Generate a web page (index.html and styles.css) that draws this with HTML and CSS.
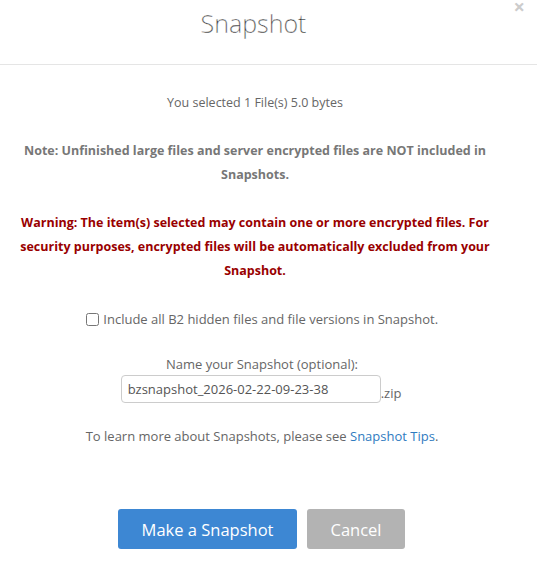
FILE: index.html
```html
<!DOCTYPE html>
<html lang="en">
  <head>
    <meta charset="UTF-8" />
    <meta name="viewport" content="width=device-width, initial-scale=1.0" />
    <title>Snapshot</title>
    <link rel="stylesheet" href="styles.css">
  </head>
  <body>
    <div class="modal">
      <div class="modal-header">
        <button class="close" type="button">&times;</button>
        <h4 class="modal-title">Snapshot</h4>
      </div>
      <div class="modal-body">
        <div class="messages">
          <p>You selected 1 File(s) 5.0 bytes</p>
          <p class="note">Note: Unfinished large files and server encrypted files are NOT included in Snapshots.</p>
          <p class="warning">Warning: The item(s) selected may contain one or more encrypted files. For security purposes, encrypted files will be automatically excluded from your Snapshot.</p>
        </div>
        <div class="options">
          <p class="check-row">
            <label><input type="checkbox" class="check" /> Include all B2 hidden files and file versions in Snapshot.</label>
          </p>
          <div class="name-label">Name your Snapshot (optional):</div>
          <div class="name-row">
            <input type="text" class="name-input" value="bzsnapshot_2026-02-22-09-23-38" /><span>.zip</span>
          </div>
          <p class="tips">To learn more about Snapshots, please see <a href="#">Snapshot Tips</a>.</p>
        </div>
      </div>
      <div class="modal-footer">
        <button class="btn btn-primary" type="button">Make a Snapshot</button>
        <button class="btn btn-cancel" type="button">Cancel</button>
      </div>
    </div>
  </body>
</html>
```

FILE: styles.css
```css
body {
  margin: 0;
  background-color: #fff;
  font-family: "Open Sans", "Noto Sans", sans-serif;
  color: #666;
}
.modal {
  width: 537px;
}
.modal-header {
  position: relative;
  height: 64px;
  border-bottom: 1px solid #e5e5e5;
  text-align: center;
  padding-right: 30px;
}
.modal-title {
  margin: 0;
  padding-top: 6px;
  font-family: "Open Sans Light", "Open Sans", sans-serif;
  font-size: 25px;
  font-weight: 300;
  line-height: 34px;
  color: #333;
  -webkit-text-stroke: 0.35px #fff;
}
.close {
  position: absolute;
  top: -3px;
  right: 12px;
  border: 0;
  background: none;
  padding: 0;
  font-family: "Open Sans", sans-serif;
  font-size: 20px;
  font-weight: 700;
  color: #ccc;
  line-height: 20px;
}
.modal-body {
  padding-top: 26px;
  text-align: center;
  line-height: 24px;
}
.modal-body p {
  margin: 0 0 24px;
}
.messages {
  padding: 0 37px 0 10px;
  font-size: 12.5px;
}
.options {
  padding: 0 23px 0 10px;
  font-size: 13px;
}
.note {
  font-weight: 700;
  color: #777;
}
.warning {
  font-weight: 700;
  color: #990000;
}
.check {
  width: 13px;
  height: 13px;
  margin: 0 1px 0 0;
  vertical-align: -2px;
}
.name-label {
  margin-top: -2px;
  line-height: 22px;
}
.name-row {
  display: flex;
  justify-content: center;
  align-items: flex-end;
  padding-right: 2px;
  margin-bottom: 21px;
}
.name-input {
  box-sizing: border-box;
  width: 260px;
  height: 28px;
  padding: 0 6px;
  border: 1px solid #ccc;
  border-radius: 4px;
  font-family: "Open Sans", sans-serif;
  font-size: 13px;
  color: #555;
}
.name-row span {
  line-height: 20px;
}
.tips a {
  color: #2f7bbf;
  text-decoration: none;
}
.modal-footer {
  display: flex;
  justify-content: center;
  gap: 10px;
  padding: 37px 14px 0 0;
}
.btn {
  height: 40px;
  border: 0;
  border-radius: 3px;
  font-family: "Open Sans", sans-serif;
  font-size: 16.5px;
  color: #fff;
}
.btn-primary {
  width: 179px;
  background-color: #3d87d3;
}
.btn-cancel {
  width: 98px;
  background-color: #b3b3b3;
}
```
